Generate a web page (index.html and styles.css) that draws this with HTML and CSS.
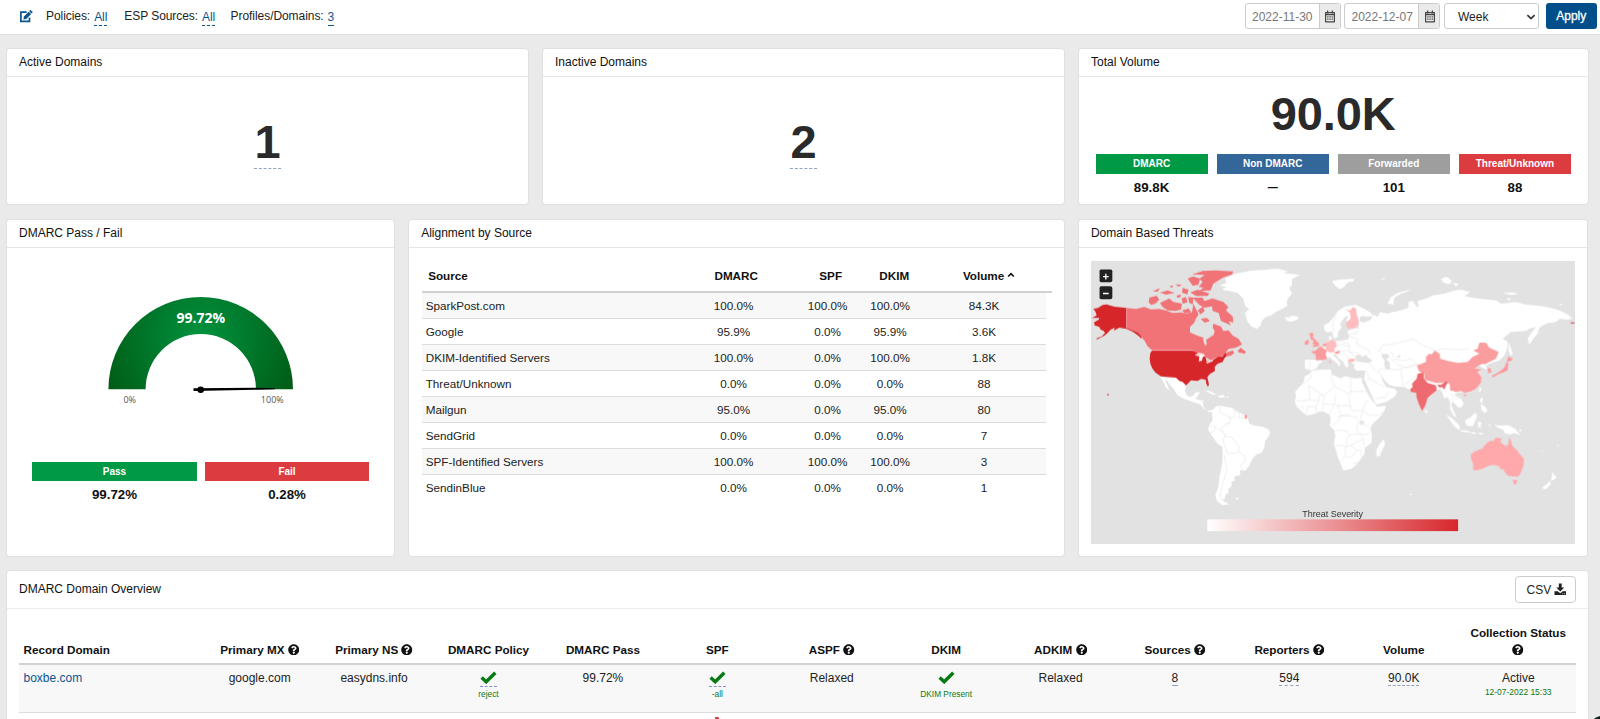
FILE: index.html
```html
<!DOCTYPE html>
<html lang="en">
<head>
<meta charset="utf-8">
<title>DMARC Dashboard</title>
<link rel="stylesheet" href="styles.css">
</head>
<body>
<svg class="defs" width="0" height="0" aria-hidden="true">
  <symbol id="help" viewBox="0 0 512 512"><path d="M504 256c0 136.997-111.043 248-248 248S8 392.997 8 256C8 119.083 119.043 8 256 8s248 111.083 248 248zM262.655 90c-54.497 0-89.255 22.957-116.549 63.758-3.536 5.286-2.353 12.415 2.715 16.258l34.699 26.31c5.205 3.947 12.621 3.008 16.665-2.122 17.864-22.658 30.113-35.797 57.303-35.797 20.429 0 45.698 13.148 45.698 32.958 0 14.976-12.363 22.667-32.534 33.976C247.128 238.528 216 254.941 216 296v4c0 6.627 5.373 12 12 12h56c6.627 0 12-5.373 12-12v-1.333c0-28.462 83.186-29.647 83.186-106.667 0-58.002-60.165-102-116.531-102zM256 338c-25.365 0-46 20.635-46 46 0 25.364 20.635 46 46 46s46-20.636 46-46c0-25.364-20.635-46-46-46z"/></symbol>
  <symbol id="check" viewBox="0 0 17 13"><path d="M1.6 6.6 6.2 10.8 15.3 1.7" fill="none" stroke="currentColor" stroke-width="3.4"/></symbol>
  <symbol id="calendar" viewBox="0 0 12 13"><path d="M1.6 2.6h8.8v9.2H1.6z" fill="none" stroke="currentColor" stroke-width="1.2" stroke-linejoin="round"/><path d="M1.5 4.6h9M3.6.6v3M8.4.6v3" stroke="currentColor" stroke-width="1.3" fill="none"/><path d="M3.2 6.9h5.8M3.2 9.2h5.8" stroke="currentColor" stroke-width="1.3" stroke-dasharray="1.3 .9" fill="none"/></symbol>
</svg>

<header class="toolbar">
  <svg class="edit" viewBox="0 0 14 13"><path d="M7.6 2.2H1.9v9.2h8.6V7.6" fill="none" stroke="currentColor" stroke-width="1.7"/><path d="M4.4 9.400 4.900 6.500 9.700 1.700l2.400 2.400-4.800 4.800zM10.200 1.200l.9-.9q.4-.4.8 0l1.600 1.500q.4.4 0 .8l-.9.9z" fill="currentColor"/></svg>
  <div class="filter policies">Policies: <a class="dash">All</a></div>
  <div class="filter sources">ESP Sources: <a class="dash">All</a></div>
  <div class="filter">Profiles/Domains: <a class="dash">3</a></div>
  <div class="controls">
    <div class="date"><span class="value">2022-11-30</span><span class="addon"><svg><use href="#calendar"/></svg></span></div>
    <div class="date"><span class="value">2022-12-07</span><span class="addon"><svg><use href="#calendar"/></svg></span></div>
    <div class="select"><span>Week</span><svg viewBox="0 0 10 6"><path d="M1.4 1.2 5 4.6 8.6 1.2" fill="none" stroke="#333" stroke-width="1.7"/></svg></div>
    <div class="apply">Apply</div>
  </div>
</header>

<main class="board">
  <div class="row top">
    <section class="card"><h2>Active Domains</h2><div class="count"><span>1</span></div></section>
    <section class="card"><h2>Inactive Domains</h2><div class="count"><span>2</span></div></section>
    <section class="card">
      <h2>Total Volume</h2>
      <div class="total">90.0K</div>
      <div class="tags four">
        <div><span class="tag green">DMARC</span><b>89.8K</b></div>
        <div><span class="tag blue">Non DMARC</span><b class="none">—</b></div>
        <div><span class="tag gray">Forwarded</span><b>101</b></div>
        <div><span class="tag red">Threat/Unknown</span><b>88</b></div>
      </div>
    </section>
  </div>

  <div class="row middle">
    <section class="card">
      <h2>DMARC Pass / Fail</h2>
      <svg class="gauge" viewBox="0 0 388 205">
        <defs><radialGradient id="gg" gradientUnits="userSpaceOnUse" cx="193.7" cy="88" r="118"><stop offset="0" stop-color="#00933f"/><stop offset="1" stop-color="#005511"/></radialGradient></defs>
        <path d="M101.4 141.3a92.3 92.3 0 0 1 184.6 0h-37a55.2 55.2 0 0 0-110.4 0z" fill="url(#gg)"/>
        <text x="193.8" y="75" class="gauge-value">99.72%</text>
        <path d="M186.500 140.300 250 139.800 268 140.300V141.200L250 141.800 186.500 143z"/>
        <circle cx="193.7" cy="141.700" r="3.300"/>
        <text x="122.700" y="155" class="gauge-mark">0%</text>
        <text x="265.300" y="155" class="gauge-mark">100%</text>
      </svg>
      <div class="tags two">
        <div><span class="tag green">Pass</span><b>99.72%</b></div>
        <div><span class="tag red">Fail</span><b>0.28%</b></div>
      </div>
    </section>

    <section class="card">
      <h2>Alignment by Source</h2>
      <div class="align">
        <div class="align-head"><span>Source</span><span>DMARC</span><span>SPF</span><span>DKIM</span><span>Volume <svg viewBox="0 0 8 6"><path d="M1.200 4.500 4 1.700l2.800 2.800" fill="none" stroke="#111" stroke-width="1.700"/></svg></span></div>
        <div class="align-row"><span>SparkPost.com</span><span>100.0%</span><span>100.0%</span><span>100.0%</span><span>84.3K</span></div>
        <div class="align-row"><span>Google</span><span>95.9%</span><span>0.0%</span><span>95.9%</span><span>3.6K</span></div>
        <div class="align-row"><span>DKIM-Identified Servers</span><span>100.0%</span><span>0.0%</span><span>100.0%</span><span>1.8K</span></div>
        <div class="align-row"><span>Threat/Unknown</span><span>0.0%</span><span>0.0%</span><span>0.0%</span><span>88</span></div>
        <div class="align-row"><span>Mailgun</span><span>95.0%</span><span>0.0%</span><span>95.0%</span><span>80</span></div>
        <div class="align-row"><span>SendGrid</span><span>0.0%</span><span>0.0%</span><span>0.0%</span><span>7</span></div>
        <div class="align-row"><span>SPF-Identified Servers</span><span>100.0%</span><span>100.0%</span><span>100.0%</span><span>3</span></div>
        <div class="align-row"><span>SendinBlue</span><span>0.0%</span><span>0.0%</span><span>0.0%</span><span>1</span></div>
      </div>
    </section>

    <section class="card">
      <h2>Domain Based Threats</h2>
      <svg class="map" viewBox="65 152 1453 849" preserveAspectRatio="none">
        <defs>
          <linearGradient id="sev"><stop offset="0" stop-color="#fff"/><stop offset="1" stop-color="#d7262b"/></linearGradient>
          <filter id="coast" x="-5%" y="-5%" width="110%" height="110%"><feTurbulence type="fractalNoise" baseFrequency=".28" numOctaves="2" seed="4"/><feDisplacementMap in="SourceGraphic" scale="3.500" xChannelSelector="R" yChannelSelector="G"/></filter>
        </defs>
        <g filter="url(#coast)">
        <g class="land">
          <path d="M450 226 472 217 466 205 500 190 545 181 590 178 625 175 657 183 640 188 692 194 668 206 668 224 660 234 668 250 657 262 652 275 655 286 640 295 620 305 605 315 590 320 578 330 574 345 562 356 547 348 535 335 530 320 527 306 540 297 527 285 522 265 505 248 480 242 457 238 472 230Z"/>
          <path d="M646 320 660 322 664 317 683 317 688 325 675 332 660 334 651 329Z"/>
          <path d="M272 498 305 500 320 502 340 515 350 525 347 540 352 555 362 560 372 556 378 546 392 545 385 558 378 566 402 571 402 588 412 600 425 600 433 596 436 606 418 605 403 594 393 582 375 576 345 566 325 555 312 535 298 518 288 503 290 515 301 541 290 532 282 515Z"/>
          <path d="M400 543 418 541 442 552 430 553 415 545ZM446 556 462 554 468 561 448 561ZM471 559h7v3h-7z"/>
          <path d="M432 598 440 588 455 586 470 590 490 593 505 605 520 611 534 617 540 640 555 645 580 650 598 657 603 666 597 680 587 692 585 712 578 726 560 733 548 747 540 765 528 781 512 779 513 794 495 798 496 810 486 815 487 826 476 838 478 847 468 853 466 865 458 870 480 882 458 884 443 872 438 855 447 830 450 800 457 770 460 740 459 710 445 700 430 680 416 657 420 643 430 630 428 610ZM498 864l12-2-4 5h-7z"/>
          <path d="M789 213 812 208 830 210 850 206 852 212 835 216 815 236 800 228Z"/>
        </g>
        <g class="edge">
          <path d="M455 588 450 605 468 615 482 622 482 638 467 645 455 655 468 672 462 690 466 708M490 593 500 610 490 622 482 622M508 606l4 20M520 612l-2 12 16 0M482 638l-12 0M422 645 440 650 430 665 420 668M440 650 468 672M466 678 485 680 500 695 510 710 508 725 495 728 475 730 466 708M508 725 525 735 528 752 512 768M510 768l18 14M465 735 472 780 460 820 452 860 460 870M380 558l10 12M395 572l8 12"/>
        </g>
        <g class="threat">
          <path fill="#f17377" d="M172 293 200 296 225 290 245 297 270 296 290 300 310 308 335 306 350 310 368 306 372 280 382 300 388 312 378 328 375 337 362 350 362 366 385 376 402 382 402 392 407 406 412 402 411 388 433 374 436 362 430 352 432 340 455 348 462 362 478 360 490 375 508 386 518 402 500 412 478 416 468 428 490 420 495 428 485 436 470 438 462 436 440 442 425 450 408 440 392 430 375 424 370 420 249 420 235 408 226 392 205 368 190 360 172 353ZM505 421 515 412 521 418 530 424 526 430 508 426Z"/>
          <path fill="#f17377" d="M240 262 262 256 270 268 258 280 245 284 238 275ZM272 278 300 264 312 275 338 280 335 298 318 302 295 300 280 290ZM250 243 272 233 265 244ZM272 247 295 240 316 248 290 253ZM318 222l20 1-10 6zM340 233 358 238 354 252 338 247ZM337 264 350 260 354 276 340 280ZM356 260 372 262 370 282 360 278ZM363 246 385 238 420 249 415 257 380 257ZM355 204 372 198 392 205 387 224 370 226ZM368 192 400 182 440 180 492 183 488 192 460 202 445 212 432 220 424 240 390 242 402 232 388 230 400 215 390 205 406 194ZM370 262 400 262 405 272 430 264 462 275 477 290 470 300 490 318 492 336 478 333 485 345 455 332 448 308 430 302 428 288 405 292 390 284ZM338 300l20-6 8 12-20 3zM385 300l16-12 5 14-12 10zM394 326l18-3 10 9-16 5zM300 228l12-3-4 8zM322 256l12-4 0 8-10 3z"/>
          <path fill="#d7262b" d="M68 323 82 315 78 303 72 296 86 293 100 284 112 282 135 289 172 293 172 353 190 360 205 366 215 377 217 386 206 375 190 364 172 356 150 352 134 361 136 352 124 358 115 368 105 376 83 387 81 384 97 378 107 368 102 361 94 358 90 350 76 345 74 336 88 328 90 323ZM114 551h4v4h-4z"/>
          <path fill="#d7262b" d="M243 428 248 421 370 421 385 428 392 434 389 450 398 452 400 440 408 438 412 453 430 450 445 440 460 438 468 428 472 437 465 444 460 455 445 460 436 470 437 482 422 491 414 500 419 522 416 530 411 520 409 508 395 506 385 512 365 510 350 525 340 515 330 512 320 502 290 500 275 498 258 486 249 474 243 460 241 445Z"/>
          <path fill="#fff" d="M376 434 386 428 402 429 408 437 400 440 396 452 388 454 390 440ZM410 455 428 449 432 452 414 460Z" opacity=".75"/>
          <path fill="#fb9a9c" d="M526 612 535 616 532 625 526 624Z"/>
        </g>
        <path d="M172 293V354M249 420H372" stroke="#f7b5b6" stroke-width="2" fill="none"/>
        <g class="land" transform="translate(600 240)">
          <path d="M128 242 150 238 178 237 186 240 187 252 200 258 215 264 225 257 245 262 262 264 278 262 283 275 292 293 300 308 310 325 318 342 322 349 350 346 345 362 330 382 310 400 303 415 308 432 306 458 287 472 285 490 275 505 262 522 245 536 222 540 216 525 207 505 200 480 193 462 198 440 195 420 181 405 184 385 180 372 165 365 150 364 130 372 112 375 95 362 82 348 76 335 80 318 77 305 90 290 103 275 106 258 118 252Z"/>
          <path d="M343 446 347 462 338 480 332 496 322 498 320 482 328 465Z"/>
          <path d="M108 207 140 209 160 212 148 222 140 235 125 240 108 236 106 222Z"/>
          <path d="M165 104 178 98 190 84 205 62 225 50 240 46 260 44 285 56 308 70 306 78 290 78 278 76 272 82 270 92 282 97 305 88 310 72 325 80 332 65 355 70 370 65 395 60 417 52 418 35 430 32 442 50 448 50 445 32 470 25 490 15 525 10 555 0 575-2 602 5 585 18 630 25 680 30 695 40 740 35 770 43 815 47 840 52 870 60 895 72 910 85 895 88 870 85 860 95 830 100 810 112 805 130 792 145 780 163 775 145 785 130 800 110 780 115 770 122 725 125 700 145 715 155 713 175 705 195 690 210 675 215 660 220 650 225 652 238 640 232 627 225 620 235 635 240 628 245 636 260 635 275 620 295 605 305 585 308 565 305 555 315 575 325 583 340 575 352 565 350 550 335 545 342 552 360 562 382 552 375 542 355 542 335 535 320 525 325 518 305 510 295 502 300 490 312 475 325 468 345 458 360 448 340 442 320 438 305 423 300 405 290 375 288 355 282 350 290 375 295 384 305 375 320 350 335 322 342 315 335 300 315 285 290 278 275 285 265 288 240 260 240 253 230 258 222 250 220 243 212 236 212 236 232 228 228 222 215 210 205 198 192 190 192 205 208 214 220 208 230 205 220 190 208 180 200 172 206 165 185 165 160 180 150 178 138 186 138 186 150 205 152 236 148 240 135 233 125 242 118 268 112 268 100 232 105 232 88 236 75 225 82 212 100 217 112 206 125 205 140 194 144 188 124 172 126 164 118Z"/>
        </g>
        <g class="land" transform="translate(780 0)">
          <path d="M175 280 183 262 205 248 240 238 238 242 215 250 195 262 192 280 200 284ZM8 213 30 208 75 206 72 212 50 214 45 228 30 236ZM335 205 352 199 368 212 360 222 342 216ZM370 218 388 220 380 228ZM153 205l20-2-14 5zM520 247 548 246 570 251 545 254ZM532 264h12v5h-10zM688 281l12 0-6 4z"/>
          <path d="M538 395 545 415 550 432 543 435 537 418Z"/>
          <path d="M350 612 370 625 390 645 392 660 375 648 362 630ZM392 660 410 660 422 663 420 667 395 664ZM406 630 422 622 438 607 444 616 438 630 430 648 412 645ZM446 635 452 634 458 640 452 644 458 655 450 650 447 657ZM458 560l-8 10 8 10 2-14zM455 580 468 590 475 602 465 608 456 598ZM450 532l6 0-2 12-5 2zM425 665l15 2 0 4-15-2zM445 668l18 0-8 5zM495 642 508 645 520 645 540 645 560 658 572 674 555 668 540 672 525 668 522 658 505 652ZM568 658l10 0-6 6zM288 597l6 5-1 7-6-3zM478 640l2 12 3-8z"/>
          <path d="M668 784 676 795 683 800 674 808 664 812 668 798ZM662 812 665 820 652 834 642 837 640 830 652 822ZM630 718l10 5-2 2zM682 703l7 2-3 4zM242 850h6v4h-5z"/>
        </g>
        <g class="sea" transform="translate(780 0)">
          <path d="M78 452 80 435 92 432 98 440 112 432 114 441 130 450 118 458 95 455ZM155 433 175 430 180 440 170 447 180 455 182 475 170 478 164 462 166 452Z"/>
          <path d="M155 497 162 505 175 520 185 526 172 531 160 512ZM98 495 108 514 138 580 130 574 115 550 98 515ZM438 458l-4 10 10 5 12-8-8-6z"/>
          <path d="M90 635l12-5 3 10-10 5zM205 435h8v6h-8z"/>
        </g>
        <g class="edge" transform="translate(600 240)">
          <path d="M122 242 126 262 100 280 90 290M118 285 164 316 195 288 185 260 188 242M118 285 122 328 92 332M122 328 148 332 150 315 164 316M195 288 244 312V262M244 303H290M164 316 162 340 195 342 200 310M195 342 205 345 242 345 238 312M205 345 215 375 240 372M148 332 140 350 115 348 112 374M140 350 142 370M162 340 158 366M195 342 180 372M242 345 250 362 280 360 290 335 300 330M280 360 300 375 325 375 345 362M280 360 272 395 300 410M215 375 208 390 190 405M205 378 230 376 262 380 268 395 262 410 268 430 240 435 232 420 198 420M268 430 285 432 300 430M240 435 232 445V465M193 465 240 468 262 455 285 445M228 468 228 500 215 512M228 500 245 500 262 480 245 466M262 480 275 478 275 500M258 515l6 4-4 6-6-4zM92 345 105 355M80 330 92 332M275 430 285 465"/>
          <path d="M122 210 120 238M185 187 205 195 225 190 240 205M202 168 220 162 238 170M205 185 232 180 250 192 262 212M204 152 238 160 242 185 262 188 275 202M240 130 262 130M240 140 265 145 262 160 280 170 300 180 302 192M262 130 268 112M325 185 340 165 375 160 400 155 430 145 460 165 500 180M340 165 330 180 345 195M365 185 375 205 400 212 425 205 445 225M365 205 390 225 410 232 440 225M300 215 315 240 335 250 340 262M290 240 300 265 290 270M300 265 345 290M320 325 350 320 355 305M375 240 395 235 400 285M395 235 445 222M400 285 430 265 442 255M325 240 345 235 380 238M500 180 530 175 560 178 600 175M465 268 498 280 502 275M545 310 555 325 565 325M555 310 575 315 580 330M545 325 560 345"/>
          <path d="M205 62 192 90 190 110 194 125M225 55 235 62"/>
        </g>
        <g class="threat" transform="translate(600 240)">
          <path fill="#ffbcbe" d="M231 57 243 60 250 50 260 55 262 70 268 90 268 104 258 112 240 116 231 108 232 95 244 85 242 68ZM170 156 185 149 200 153 202 168 195 174 196 184 182 187 170 180 168 166ZM236 207 245 205 257 206 254 214 238 216Z"/>
          <path fill="#fb9a9c" d="M120 130 128 126 133 132 130 140 140 150 150 160 148 168 128 170 135 162 128 160 134 152 125 148ZM106 154 115 148 120 152 116 162 107 164ZM126 183 138 181 152 168 172 180 169 192 174 206 160 208 140 210 139 192 128 187ZM160 163 170 157 169 168 160 166ZM180 212l3-1 1 6-4 2zM195 186 210 180 211 188 200 191Z"/>
        </g>
        <g class="threat" transform="translate(780 0)">
          <path fill="#fb9c9e" d="M263 465 290 455 290 440 300 430 307 432 317 420 332 432 332 445 355 452 385 458 415 455 430 440 450 430 432 420 445 415 450 397 470 397 480 412 508 425 500 445 480 455 465 462 460 460 447 465 437 475 458 477 445 485 456 500 456 515 440 535 425 543 405 548 395 542 380 545 370 542 362 540 362 525 355 513 335 518 320 518 300 512 287 508 284 490 268 482ZM403 552l8 0-4 8zM475 475l8-2 4 12-10 5z"/>
          <path fill="#ec6a6f" d="M265 490 282 486 284 505 295 518 320 525 322 540 310 550 295 563 288 585 278 602 268 580 262 562 260 547 245 545 242 537 250 530 248 520 262 505ZM324 522 335 524 348 513 357 515 350 525 345 538 338 530 330 532Z"/>
          <path fill="#ffa9ab" d="M424 732 440 722 458 715 470 700 482 692 492 692 500 682 518 685 513 695 530 708 537 700 540 680 545 690 550 708 562 718 572 732 584 745 583 765 575 785 568 798 550 798 535 795 526 785 520 775 514 778 510 768 495 764 478 766 460 775 440 780 431 778 432 762 425 745ZM550 808l14 2-4 12-6 0z"/>
          <path fill="#fb9a9c" d="M537 438 550 445 545 452 532 455ZM532 455 537 458 535 480 520 487 505 492 490 502 488 495 505 488 525 472Z"/>
          <path fill="#d7262b" d="M723 336h12v3h-9z"/>
        </g>
        </g>
        <rect x="90" y="177" width="39" height="39" rx="6" fill="#222"/><rect x="90" y="228" width="39" height="39" rx="6" fill="#222"/>
        <path d="M101 199H118M109.500 190.500V207.500M101 249.500H118" stroke="#fff" stroke-width="4"/>
        <rect x="414" y="927" width="753" height="36" fill="url(#sev)"/>
        <text x="790" y="920" class="legend">Threat Severity</text>
      </svg>
    </section>
  </div>

  <section class="card overview">
    <div class="overview-head"><h3>DMARC Domain Overview</h3><div class="csv">CSV <svg viewBox="0 0 13 13"><path d="M5 .5h3v4.200h2.700L6.500 8.900 2.300 4.700H5zM.5 8.500h3.400l2.600 2.200 2.600-2.200h3.400v4H.5z" fill="#222"/><path d="M8.600 11.100h1M10.500 11.100h1" stroke="#fff" stroke-width=".8"/></svg></div></div>
    <table>
      <thead><tr>
        <th>Record Domain</th><th>Primary MX <svg><use href="#help"/></svg></th><th>Primary NS <svg><use href="#help"/></svg></th><th>DMARC Policy</th><th>DMARC Pass</th><th>SPF</th><th>ASPF <svg><use href="#help"/></svg></th><th>DKIM</th><th>ADKIM <svg><use href="#help"/></svg></th><th>Sources <svg><use href="#help"/></svg></th><th>Reporters <svg><use href="#help"/></svg></th><th>Volume</th><th>Collection Status<br><svg><use href="#help"/></svg></th>
      </tr></thead>
      <tbody>
        <tr class="first">
          <td><a>boxbe.com</a></td><td>google.com</td><td>easydns.info</td>
          <td><div class="mark dotted"><svg><use href="#check"/></svg></div><small>reject</small></td>
          <td>99.72%</td>
          <td><div class="mark dotted"><svg><use href="#check"/></svg></div><small>-all</small></td>
          <td>Relaxed</td>
          <td><div class="mark"><svg><use href="#check"/></svg></div><small>DKIM Present</small></td>
          <td>Relaxed</td><td><span class="num">8</span></td><td><span class="num">594</span></td><td><span class="num">90.0K</span></td>
          <td>Active<small class="stamp">12-07-2022 15:33</small></td>
        </tr>
        <tr class="second"><td></td><td></td><td></td><td></td><td></td><td><i class="alert"></i></td><td></td><td></td><td></td><td></td><td></td><td></td><td></td></tr>
      </tbody>
    </table>
  </section>
</main>
<svg class="corner" viewBox="0 0 6 3"><path d="M0 3 2 1.500 6 0V3Z" fill="#10201a"/></svg>
</body>
</html>
```
FILE: styles.css
```css
* { box-sizing: border-box; }
html, body { margin: 0; height: 719px; overflow: hidden; }
body { background: #eaeaea; color: #222; font: 12px/16px "Liberation Sans", Arial, sans-serif; }
.defs { position: absolute; }
svg { display: block; }

.toolbar { height: 35px; background: #fff; border-bottom: 1px solid #dedede; display: flex; align-items: flex-start; padding-left: 19px; color: #222; }
.edit { width: 14px; height: 13px; margin: 9.500px 13px 0 0; color: #0a5490; flex: none; }
.filter { margin-top: 8px; white-space: nowrap; display: flex; gap: 4px; letter-spacing: -.06px; }
.policies { width: 78.300px; }
.sources { width: 106.300px; }
.dash { color: #0a5490; line-height: 15px; height: 18px; padding-top: 1.500px; border-bottom: 1px dashed #0a5490; }
.controls { margin: 3px 3px 0 auto; display: flex; height: 26px; }
.date { width: 96px; display: flex; border: 1px solid #ccc; border-radius: 3px; margin-right: 3.500px; color: #777; overflow: hidden; }
.value { flex: 1; padding: 4.500px 0 0 6.500px; }
.addon { width: 21px; background: #eaeaea; border-left: 1px solid #ccc; color: #444; padding: 6px 0 0 4.500px; }
.addon svg { width: 12px; height: 13px; }
.select { width: 95px; border: 1px solid #ccc; border-radius: 3px; display: flex; justify-content: space-between; padding: 4.500px 2px 0 13.500px; margin-right: 7px; }
.select svg { width: 10px; height: 6px; margin-top: 5px; }
.apply { width: 51.500px; border-radius: 3px; background: #004f8a; color: #fff; text-align: center; line-height: 26px; -webkit-text-stroke: .3px #fff; }

.board { padding: 12.500px 11.500px 0 6px; }
.row { display: grid; }
.top { grid-template-columns: 523px 523px 510.500px; column-gap: 13px; height: 157.500px; }
.middle { grid-template-columns: 389px 656.500px 510.500px; column-gap: 13.200px; height: 338px; margin-top: 13.500px; }
.card { background: #fff; border: 1px solid #e0e0e0; border-radius: 4px; min-width: 0; }
.card h2 { margin: 0; height: 28.500px; border-bottom: 1px solid #e6e6e6; padding: 5px 0 0 12px; font-size: 12px; line-height: 16px; font-weight: 400; color: #111; }
.count { text-align: center; padding-top: 38px; }
.count span { display: inline-block; height: 54px; line-height: 54px; font-size: 47px; font-weight: 700; color: #2a2a2a; border-bottom: 1px dashed #8fa2c4; }
.total { text-align: center; font-size: 47px; line-height: 54px; font-weight: 700; color: #2a2a2a; margin-top: 9.500px; letter-spacing: -.1px; }
.tags { display: grid; column-gap: 9px; text-align: center; }
.four { grid-template-columns: repeat(4, 1fr); margin: 13.500px 16.500px 0 16.500px; }
.two { grid-template-columns: 165px 164px; column-gap: 8px; margin: 8.500px 0 0 25px; }
.tag { display: block; height: 19.500px; line-height: 20px; font-size: 10px; font-weight: 700; color: #fff; }
.tags b { display: block; font-size: 13.300px; line-height: 18px; margin-top: 5px; color: #111; }
.tags .none { font-size: 10px; }
.green { background: #009a46; }
.blue { background: #336699; }
.gray { background: #9e9e9e; }
.red { background: #dc3c3f; }

.gauge { width: 388px; height: 205px; }
.gauge-value { font: 700 14px "Open Sans", sans-serif; fill: #fff; text-anchor: middle; }
.gauge-mark { font: 9px "Open Sans", sans-serif; fill: #555; text-anchor: middle; }

.align { padding: 15px 0 0 12.500px; font-size: 11.700px; }
.align-head { display: grid; grid-template-columns: 251px 127px 62px 65px 125px; width: 630px; height: 29.500px; border-bottom: 2px solid #d2d2d2; font-weight: 700; color: #111; padding-top: 4.500px; text-align: center; }
.align-head span:first-child { text-align: left; padding-left: 6.500px; }
.align-head svg { display: inline-block; width: 8px; height: 6px; vertical-align: 2px; }
.align-row { display: grid; grid-template-columns: 245.500px 133px 55px 70px 121px; width: 624.500px; height: 26.020px; padding-top: 5px; border-bottom: 1px solid #dcdcdc; text-align: center; }
.align-row span:first-child { text-align: left; padding-left: 4px; }
.align-row span:last-child { padding-right: 3.500px; }
.align-row:nth-child(even) { background: #f8f8f8; }
.align-row:last-child { border-bottom: 0; }
.align-head, .align-row { white-space: nowrap; }

.map { width: 484.300px; height: 283px; margin: 12.500px 0 0 12px; background: #e2e2e2; }
.land { fill: #fff; }
.sea { fill: #e2e2e2; }
.edge { fill: none; stroke: #e9e9e9; stroke-width: 2; }
.threat { stroke: none; }
.legend { font: 27px "Liberation Sans", Arial, sans-serif; fill: #333; text-anchor: middle; }

.overview { margin-top: 13.500px; height: 180px; }
.overview-head { height: 37.500px; border-bottom: 1px solid #ececec; display: flex; justify-content: space-between; padding: 4.500px 12px 0 12px; }
.overview h3 { margin: 5px 0 0; font-size: 12px; line-height: 16px; font-weight: 400; color: #111; }
.csv { width: 60.500px; height: 27px; border: 1px solid #ccc; border-radius: 4px; display: flex; padding: 5px 0 0 10.500px; gap: 3px; }
.csv svg { width: 12.500px; height: 12.500px; margin-top: 1px; }
table { table-layout: fixed; width: 1556.500px; margin-left: 12px; border-collapse: separate; border-spacing: 0; }
table th:first-child { width: 183.500px; text-align: left; padding-left: 4.500px; }
th { height: 56px; vertical-align: bottom; padding: 0 0 5px; border-bottom: 2px solid #d2d2d2; font-size: 11.700px; line-height: 17px; color: #111; white-space: nowrap; }
th svg { display: inline-block; width: 11.500px; height: 11.500px; vertical-align: -1.500px; fill: #111; }
td { vertical-align: top; padding: 5px 0 0; text-align: center; }
td:first-child { text-align: left; padding-left: 4.500px; }
td a { color: #0a5490; }
.first td { height: 48px; background: #f8f8f8; border-bottom: 1px solid #dcdcdc; }
.mark { width: 17px; height: 17px; margin: 0 auto; padding-top: 1px; color: #077a14; }
.mark svg { width: 17px; height: 13px; }
.dotted { border-bottom: 1px dashed #7f93c4; }
small { display: block; font-size: 8.300px; line-height: 10px; color: #077a14; margin-top: 2px; }
.stamp { font-size: 8.450px; margin-top: 1px; }
.num { display: inline-block; height: 16.500px; border-bottom: 1px dashed #8fa2c4; }
.alert { display: block; width: 4px; height: 6px; border-radius: 1px; margin: -.5px auto 0; background: #dc3c3f; }
.corner { position: absolute; right: 0; top: 716px; width: 6px; height: 3px; }
```
